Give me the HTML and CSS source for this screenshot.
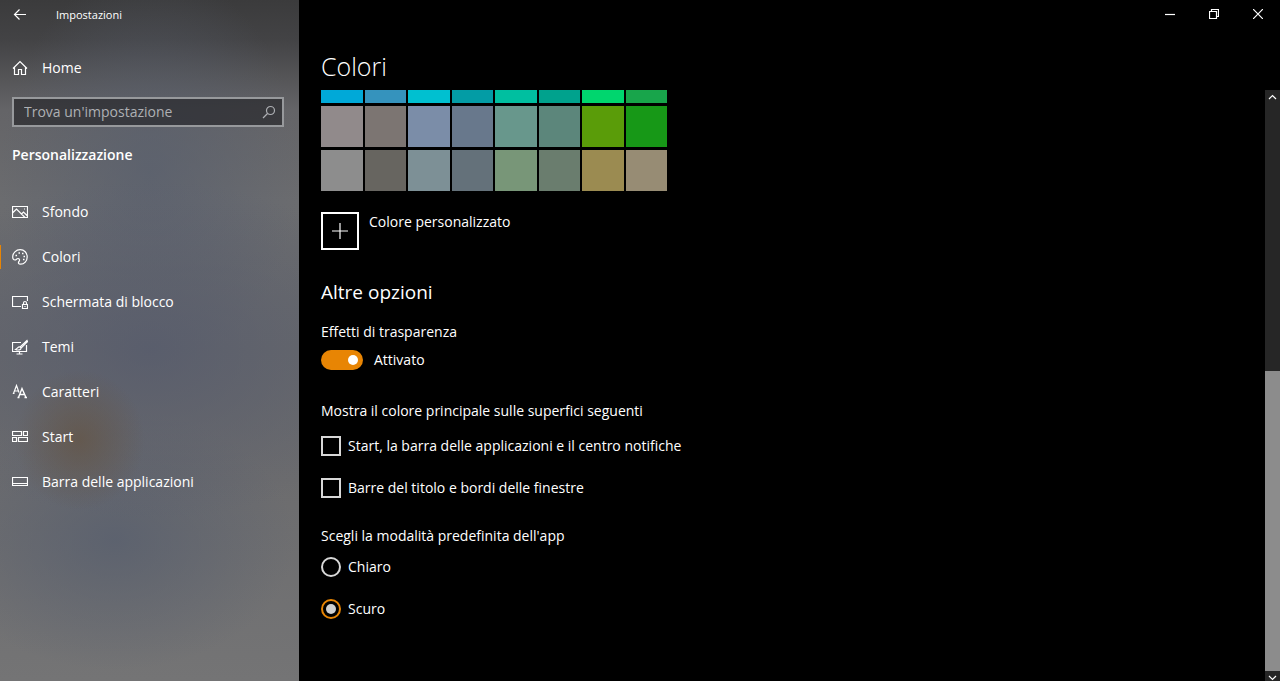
FILE: index.html
```html
<!DOCTYPE html>
<html lang="it">
<head>
    <meta charset="UTF-8">
    <meta name="viewport" content="width=device-width, initial-scale=1.0">
    <title>Impostazioni</title>
    <link rel="stylesheet" href="styles.css">
</head>
<body>
    <aside class="sidebar">
        <header class="app-bar">
            <button class="back" aria-label="Indietro">
                <svg width="14" height="12" viewBox="0 0 14 12"><path d="M13 5.500H1.500M6.500.5l-5 5 5 5"/></svg>
            </button>
            <span>Impostazioni</span>
        </header>

        <a class="home" href="#">
            <svg width="16" height="16" viewBox="0 0 16 16"><path d="M1 8.500L8 1.500l7 7M2.500 7.500v7h4V9.500h3v5h4v-7"/></svg>
            <span>Home</span>
        </a>

        <form class="search">
            <input type="text" placeholder="Trova un'impostazione" aria-label="Trova un'impostazione">
            <svg width="14" height="14" viewBox="0 0 14 14"><circle cx="8.500" cy="5.500" r="4"/><path d="M5.500 8.500L1 13"/></svg>
        </form>

        <h2 class="category">Personalizzazione</h2>

        <nav class="menu">
            <a href="#">
                <svg width="16" height="16" viewBox="0 0 16 16"><path d="M.5 2.500h15v11H.5zM.5 9l4-4 8.500 8.500M9.500 10l2-2 4 4"/><path d="M12 5h1"/></svg>
                <span>Sfondo</span>
            </a>
            <a href="#" class="active">
                <svg width="16" height="16" viewBox="0 0 16 16"><path d="M.7 8C.7 4 4 .7 8.200.7c4 0 7 3 7 7.200 0 4-3 7.300-6.500 7.300-2.500 0-2.700-1.500-1.700-2.700 1-1.500.5-3-1-3-1.500 0-1.500 1.500-3 1.500C1.500 11 .7 9.800.7 8z"/><path d="M3.500 6.500H5M6.500 4H8M10 4.500h1.500M11.500 7.500H13M11 10.500h1.500" stroke-width="1.600"/></svg>
                <span>Colori</span>
            </a>
            <a href="#">
                <svg width="16" height="16" viewBox="0 0 16 16"><path d="M9 12.500H.5v-10h15V7M10.500 10.500h5v4h-5zM11.500 10.500V9c0-2 3-2 3 0v1.500M13 12v1"/></svg>
                <span>Schermata di blocco</span>
            </a>
            <a href="#">
                <svg width="16" height="16" viewBox="0 0 16 16"><path d="M9 3.500H.5v9h14V6M4.500 15h6M7.500 12.500V15"/><path d="M15 1.500L8 8l1 1.200 6.500-6.500zM8 8c-2-.5-2.500 1.500-4.500 2.500 2.500 1 5.500.5 5.500-1.300"/></svg>
                <span>Temi</span>
            </a>
            <a href="#">
                <svg width="16" height="16" viewBox="0 0 16 16"><path d="M1.500 9.500l3-8 2.500 7M2.500 7h4M.8 9.500h1.700"/><path d="M6.500 13.500l3.500-9 4 9M8 10.500h5M5.500 13.500h2M12.500 13.500h2.500" stroke-width="1.400"/></svg>
                <span>Caratteri</span>
            </a>
            <a href="#">
                <svg width="16" height="16" viewBox="0 0 16 16"><path d="M.5 2.500h9v4h-9zM11.500 2.500h4v4h-4zM.5 8.500h4v4h-4zM6.500 8.500h9v4h-9z"/></svg>
                <span>Start</span>
            </a>
            <a href="#">
                <svg width="16" height="16" viewBox="0 0 16 16"><path d="M.5 3.500h15v8H.5zM.5 9.500h15"/></svg>
                <span>Barra delle applicazioni</span>
            </a>
        </nav>
    </aside>

    <main class="page">
        <div class="window-buttons">
            <button aria-label="Riduci a icona"><svg width="10" height="10" viewBox="0 0 10 10"><path d="M0 5.500h10"/></svg></button>
            <button aria-label="Ripristina"><svg width="10" height="10" viewBox="0 0 10 10"><path d="M.5 2.500h7v7h-7zM2.500 2.500v-2h7v7h-2"/></svg></button>
            <button aria-label="Chiudi"><svg width="10" height="10" viewBox="0 0 10 10"><path d="M0 0l10 10M10 0L0 10"/></svg></button>
        </div>

        <h1>Colori</h1>

        <div class="scroll-area">
            <div class="content">
                <div class="swatches">
                    <button class="c-sky" aria-label="Celeste"></button>
                    <button class="c-steel" aria-label="Blu acciaio"></button>
                    <button class="c-cyan" aria-label="Ciano"></button>
                    <button class="c-teal" aria-label="Verde acqua scuro"></button>
                    <button class="c-mint" aria-label="Menta"></button>
                    <button class="c-mint-dark" aria-label="Menta scuro"></button>
                    <button class="c-emerald" aria-label="Smeraldo"></button>
                    <button class="c-grass" aria-label="Verde prato"></button>

                    <button class="c-mauve" aria-label="Grigio malva"></button>
                    <button class="c-taupe" aria-label="Grigio talpa"></button>
                    <button class="c-periwinkle" aria-label="Pervinca"></button>
                    <button class="c-slate" aria-label="Ardesia"></button>
                    <button class="c-moss" aria-label="Muschio chiaro"></button>
                    <button class="c-moss-dark" aria-label="Muschio"></button>
                    <button class="c-lime" aria-label="Verde lime"></button>
                    <button class="c-green" aria-label="Verde"></button>

                    <button class="c-gray" aria-label="Grigio"></button>
                    <button class="c-gray-dark" aria-label="Grigio scuro"></button>
                    <button class="c-fog" aria-label="Nebbia"></button>
                    <button class="c-storm" aria-label="Tempesta"></button>
                    <button class="c-sage" aria-label="Salvia"></button>
                    <button class="c-sage-dark" aria-label="Salvia scuro"></button>
                    <button class="c-camo" aria-label="Mimetico"></button>
                    <button class="c-sand" aria-label="Sabbia"></button>
                </div>

                <div class="custom-color">
                    <button id="custom" aria-label="Colore personalizzato">
                        <svg width="16" height="16" viewBox="0 0 16 16"><path d="M0 8h16M8 0v16"/></svg>
                    </button>
                    <label for="custom">Colore personalizzato</label>
                </div>

                <h2>Altre opzioni</h2>

                <h3>Effetti di trasparenza</h3>
                <label class="toggle">
                    <input type="checkbox" aria-label="Effetti di trasparenza" checked>
                    <span>Attivato</span>
                </label>

                <fieldset class="options">
                    <legend>Mostra il colore principale sulle superfici seguenti</legend>
                    <label><input type="checkbox"> Start, la barra delle applicazioni e il centro notifiche</label>
                    <label><input type="checkbox"> Barre del titolo e bordi delle finestre</label>
                </fieldset>

                <fieldset class="options">
                    <legend>Scegli la modalità predefinita dell'app</legend>
                    <label><input type="radio" name="mode"> Chiaro</label>
                    <label><input type="radio" name="mode" checked> Scuro</label>
                </fieldset>
            </div>

            <div class="scrollbar">
                <button aria-label="Scorri su"><svg width="9" height="6" viewBox="0 0 9 6"><path d="M1 5l3.500-3.500L8 1.500" stroke="none"/><path d="M1 5l3.500-3.500L8 5"/></svg></button>
                <div class="track"><div class="thumb"></div></div>
                <button class="down" aria-label="Scorri giù"><svg width="9" height="6" viewBox="0 0 9 6"><path d="M1 1l3.500 3.500L8 1"/></svg></button>
            </div>
        </div>
    </main>
</body>
</html>
```
FILE: styles.css
```css
* {
    box-sizing: border-box;
}

body {
    font-family: 'Segoe UI', 'Open Sans', 'Noto Sans', sans-serif;
    font-size: 14px;
    line-height: 20px;
    background-color: #000;
    color: #fff;
    margin: 0;
    display: flex;
    height: 100vh;
    overflow: hidden;
}

h1, h2, h3 {
    margin: 0;
    font-weight: 400;
}

button {
    padding: 0;
    border: none;
    background: none;
    color: inherit;
    display: flex;
    align-items: center;
    justify-content: center;
}

a {
    color: inherit;
    text-decoration: none;
}

svg {
    fill: none;
    stroke: currentColor;
    stroke-width: 1.2;
    flex-shrink: 0;
}

/* Sidebar */
.sidebar {
    width: 299px;
    flex-shrink: 0;
    background:
        radial-gradient(ellipse 65px 70px at 80px 440px, rgba(100, 86, 72, 0.8), rgba(100, 86, 72, 0)),
        radial-gradient(ellipse 260px 170px at 150px 350px, rgba(86, 91, 108, 0.8), rgba(86, 91, 108, 0)),
        radial-gradient(ellipse 180px 130px at 115px 540px, rgba(88, 95, 110, 0.8), rgba(88, 95, 110, 0)),
        radial-gradient(ellipse 150px 200px at 150px 170px, rgba(88, 95, 110, 0.7), rgba(88, 95, 110, 0)),
        linear-gradient(#3b3b3c, #434345 40px, #646467 110px, #6b6c6f 200px, #68696c 350px, #6c6c6e 480px, #747475);
}

.app-bar {
    display: flex;
    align-items: center;
    height: 30px;
    font-size: 11px;
}

.back {
    width: 40px;
    height: 28px;
    margin-right: 16px;
}

.home {
    display: flex;
    align-items: center;
    gap: 14px;
    height: 36px;
    margin-top: 20px;
    padding-left: 12px;
}

.search {
    display: flex;
    align-items: center;
    height: 30px;
    margin: 11px 15px 0 12px;
    padding: 0 6px 0 10px;
    border: 2px solid #97999c;
    background-color: rgba(30, 30, 34, 0.6);
    color: #aeb0b4;
}

.search input {
    flex: 1;
    min-width: 0;
    padding: 0;
    border: none;
    outline: none;
    background: none;
    color: #fff;
    font: inherit;
}

.search input::placeholder {
    color: #aeb0b4;
}

.category {
    margin: 18px 12px 0;
    font-size: 14px;
    font-weight: 600;
}

.menu {
    margin-top: 24px;
}

.menu a {
    display: flex;
    align-items: center;
    gap: 14px;
    height: 45px;
    padding-left: 12px;
    position: relative;
}

.menu .active::before {
    content: "";
    position: absolute;
    left: 0;
    width: 1px;
    height: 24px;
    background-color: #e88504;
}

/* Page */
.page {
    flex: 1;
    min-width: 0;
    display: flex;
    flex-direction: column;
}

.window-buttons {
    display: flex;
    justify-content: flex-end;
    height: 28px;
}

.window-buttons button {
    width: 44px;
}

.page h1 {
    margin: 22px 22px 8px;
    font-size: 25px;
    line-height: 32px;
    font-weight: 300;
}

.scroll-area {
    flex: 1;
    min-height: 0;
    display: flex;
}

.content {
    flex: 1;
    padding: 0 22px;
}

/* the first row is scrolled partly out of view */
.swatches {
    display: grid;
    grid-template-columns: repeat(8, 1fr);
    grid-template-rows: 13px 41px 41px;
    gap: 3px 2px;
    max-width: 346px;
}

.c-sky { background-color: #00a9d8; }
.c-steel { background-color: #3593bd; }
.c-cyan { background-color: #00c0d0; }
.c-teal { background-color: #039ca5; }
.c-mint { background-color: #00bfa0; }
.c-mint-dark { background-color: #00a28d; }
.c-emerald { background-color: #00d66e; }
.c-grass { background-color: #18a54b; }
.c-mauve { background-color: #918a8b; }
.c-taupe { background-color: #7c7572; }
.c-periwinkle { background-color: #7b8da8; }
.c-slate { background-color: #68788c; }
.c-moss { background-color: #68978c; }
.c-moss-dark { background-color: #5c867b; }
.c-lime { background-color: #5a9c09; }
.c-green { background-color: #179817; }
.c-gray { background-color: #8d8d8d; }
.c-gray-dark { background-color: #676560; }
.c-fog { background-color: #7d9096; }
.c-storm { background-color: #64717a; }
.c-sage { background-color: #789678; }
.c-sage-dark { background-color: #6a7d6e; }
.c-camo { background-color: #9b8b51; }
.c-sand { background-color: #978c74; }

.custom-color {
    display: flex;
    gap: 10px;
    margin-top: 21px;
}

.custom-color button {
    width: 38px;
    height: 38px;
    border: 2px solid #fff;
}

.content h2 {
    margin-top: 28px;
    font-size: 19px;
    line-height: 28px;
}

.content h3 {
    margin-top: 16px;
    font-size: 14px;
}

.toggle {
    display: flex;
    align-items: center;
    gap: 11px;
    margin-top: 8px;
}

.toggle input {
    appearance: none;
    display: flex;
    align-items: center;
    justify-content: flex-end;
    width: 42px;
    height: 20px;
    margin: 0;
    padding: 0 5px;
    border-radius: 10px;
    background-color: #e88504;
}

.toggle input::before {
    content: "";
    width: 10px;
    height: 10px;
    border-radius: 50%;
    background-color: #fff;
}

.options {
    margin: 31px 0 0;
    padding: 0;
    border: none;
}

.options + .options {
    margin-top: 28px;
}

.options legend {
    padding: 0;
    margin-bottom: 15px;
}

.options + .options legend {
    margin-bottom: 11px;
}

.options label {
    display: flex;
    align-items: center;
    gap: 7px;
}

.options label + label {
    margin-top: 22px;
}

.options input {
    appearance: none;
    display: grid;
    place-items: center;
    width: 20px;
    height: 20px;
    margin: 0;
    border: 2px solid #d8d8d8;
}

.options input[type="radio"] {
    border-radius: 50%;
}

.options input[type="radio"]:checked {
    border-color: #e88504;
}

.options input[type="radio"]:checked::before {
    content: "";
    width: 10px;
    height: 10px;
    border-radius: 50%;
    background-color: #d0d0d0;
}

/* Scrollbar */
.scrollbar {
    display: flex;
    flex-direction: column;
    width: 15px;
    background-color: #262626;
}

.scrollbar button {
    height: 14px;
    flex-shrink: 0;
}

.scrollbar .down {
    height: 10px;
    align-items: flex-end;
}

.track {
    flex: 1;
    display: flex;
    flex-direction: column;
    justify-content: flex-end;
}

.thumb {
    height: 53%;
    background-color: #8c8c8c;
}
```
